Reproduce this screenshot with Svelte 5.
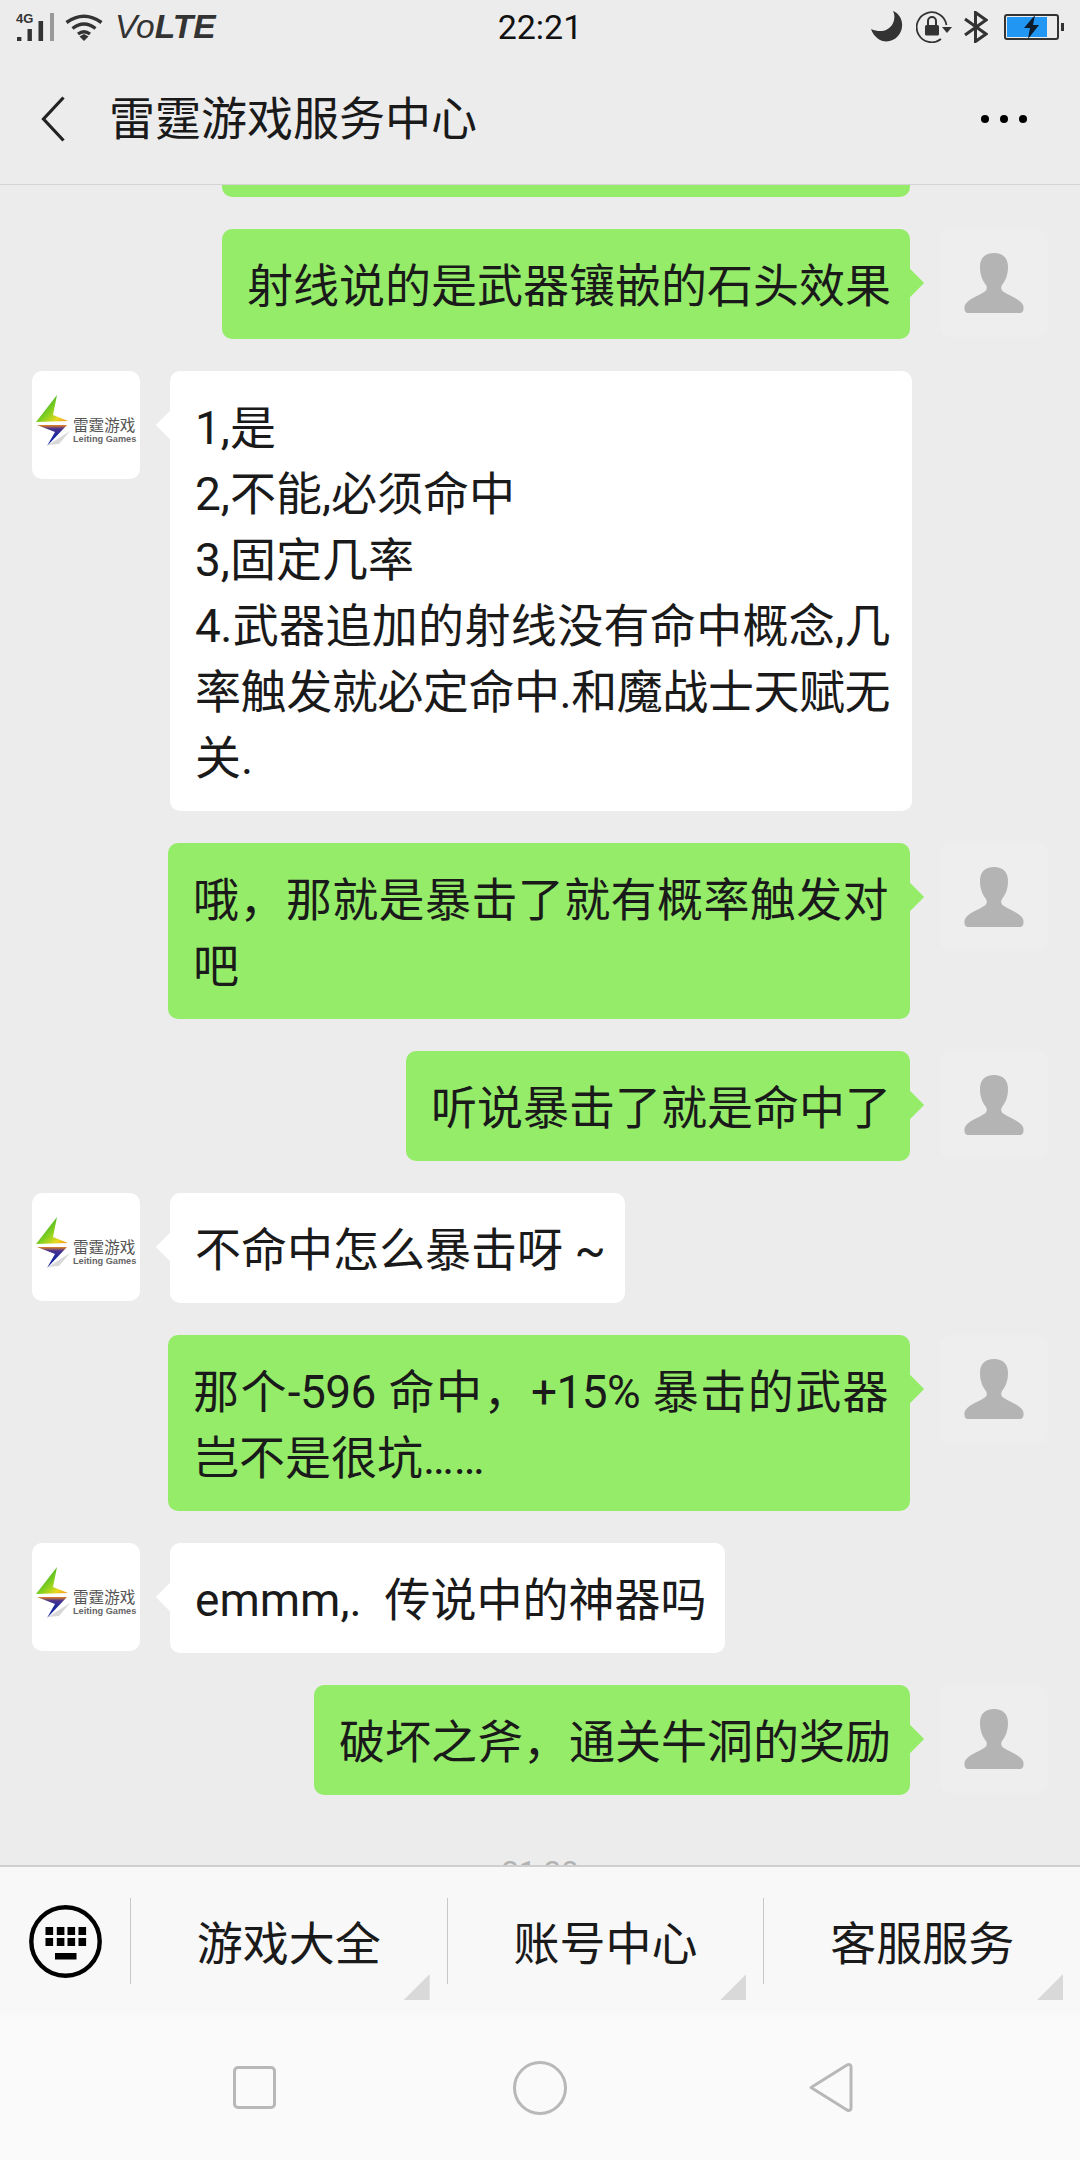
<script lang="ts">
  interface Message {
    from: 'me' | 'them'
    lines: string[]
  }

  const messages: Message[] = [
    { from: 'me', lines: ['射线说的是武器镶嵌的石头效果'] },
    {
      from: 'them',
      lines: [
        '1,是',
        '2,不能,必须命中',
        '3,固定几率',
        '4.武器追加的射线没有命中概念,几',
        '率触发就必定命中.和魔战士天赋无',
        '关.',
      ],
    },
    { from: 'me', lines: ['哦，那就是暴击了就有概率触发对', '吧'] },
    { from: 'me', lines: ['听说暴击了就是命中了'] },
    { from: 'them', lines: ['不命中怎么暴击呀 ~'] },
    { from: 'me', lines: ['那个-596 命中，+15% 暴击的武器', '岂不是很坑……'] },
    { from: 'them', lines: ['emmm,.  传说中的神器吗'] },
    { from: 'me', lines: ['破坏之斧，通关牛洞的奖励'] },
  ]

  const menus = ['游戏大全', '账号中心', '客服服务']

  // lines that wrapped at the bubble's max width fill it edge to edge
  const is_full_line = (message: Message, line: string) => message.lines.length > 1 && line.length >= 15
</script>

{#snippet logo()}
  <svg class="logo" viewBox="0 0 108 108">
    <defs>
      <linearGradient id="bolt_top" x1="10" y1="30" x2="32" y2="52" gradientUnits="userSpaceOnUse">
        <stop offset="0" stop-color="#2fae2c" />
        <stop offset="0.45" stop-color="#8cd21e" />
        <stop offset="0.75" stop-color="#e8d820" />
        <stop offset="1" stop-color="#f39a1c" />
      </linearGradient>
      <linearGradient id="bolt_bottom" x1="0" y1="54" x2="0" y2="75" gradientUnits="userSpaceOnUse">
        <stop offset="0" stop-color="#e8841f" />
        <stop offset="0.18" stop-color="#4a3490" />
        <stop offset="0.5" stop-color="#1c2a9c" />
        <stop offset="1" stop-color="#10209c" />
      </linearGradient>
    </defs>
    <path d="M16 74 L38 60 L27 73 Z" fill="#d8d8d8" />
    <path d="M25 24 L4 51 L36 50 L21 44 Z" fill="url(#bolt_top)" />
    <path d="M5 54 L35 54 L15 75 L23 61 Z" fill="url(#bolt_bottom)" />
    <text x="41" y="60" class="logo_cn">雷霆游戏</text>
    <text x="41" y="70.5" class="logo_en">Leiting Games</text>
  </svg>
{/snippet}

{#snippet person()}
  <svg class="person" viewBox="0 0 108 108">
    <path
      d="M54 24 C45 24 40 29 40 38 C40 47 43 52 46 56 C47.5 59 47 61 44 63 C38 67 28 70 25 76 C24 78 24 84 28 84 L80 84 C84 84 84 78 83 76 C80 70 70 67 64 63 C61 61 60.5 59 62 56 C65 52 68 47 68 38 C68 29 63 24 54 24 Z"
      fill="#b4b4b4"
    />
  </svg>
{/snippet}

<div class="phone">
  <header class="top">
    <div class="status">
      <div class="status_left">
        <svg class="signal" viewBox="0 0 40 32">
          <text x="0" y="12" class="four_g">4G</text>
          <rect x="1" y="26" width="4.4" height="4" fill="#333" />
          <rect x="11.5" y="18" width="4.4" height="12" fill="#333" />
          <rect x="22.5" y="10" width="4.6" height="20" fill="#333" />
          <rect x="34" y="2" width="4" height="28" fill="#999" />
        </svg>
        <svg class="wifi" viewBox="0 0 38 27">
          <path d="M1.5 8.5 Q19 -4 36.5 8.5" fill="none" stroke="#333" stroke-width="3.4" />
          <path d="M7.5 14.5 Q19 5.5 30.5 14.5" fill="none" stroke="#333" stroke-width="3.4" />
          <path d="M13 20 Q19 15.5 25 20" fill="none" stroke="#333" stroke-width="3.4" />
          <path d="M14.5 22.5 L19 20 L23.5 22.5 L19 27 Z" fill="#333" />
        </svg>
        <span class="volte">Vo<b>LTE</b></span>
      </div>
      <span class="clock">22:21</span>
      <div class="status_right">
        <svg class="moon" viewBox="0 0 32 32">
          <path d="M22 0 C32 4 34 17 27 25 C19 34 5 32 0 18 C9 22 17 20 21 14 C24 9 24 4 22 0 Z" fill="#333" />
        </svg>
        <svg class="lock" viewBox="0 0 36 32">
          <path d="M25 28 A15 15 0 1 1 30.5 14" fill="none" stroke="#333" stroke-width="1.8" />
          <path d="M26 16 L36 16 L31 22 Z" fill="#333" />
          <rect x="9" y="14" width="14" height="10.5" rx="1.5" fill="#333" />
          <path d="M12 14 V10 A4 4 0 0 1 20 10 V14" fill="none" stroke="#333" stroke-width="2" />
        </svg>
        <svg class="bluetooth" viewBox="0 0 24 32">
          <path d="M1 8 L22 23 L11.5 30.5 V1.5 L22 9 L1 24" fill="none" stroke="#333" stroke-width="3" />
        </svg>
        <svg class="battery" viewBox="0 0 60 26">
          <rect x="1" y="1" width="53" height="24" rx="2" fill="none" stroke="#333" stroke-width="2" />
          <rect x="3" y="3" width="40" height="20" fill="#2196f3" />
          <rect x="57" y="9" width="3" height="8" fill="#333" />
          <path d="M31 1 L20 14 L26 14 L24 25 L35 11 L29 11 Z" fill="#0d1b2a" />
        </svg>
      </div>
    </div>
    <nav class="title_bar">
      <svg class="back" viewBox="0 0 24 46">
        <path d="M22.5 1.5 L2.5 23 L22.5 44.5" fill="none" stroke="#222" stroke-width="3.2" />
      </svg>
      <h1>雷霆游戏服务中心</h1>
      <div class="dots"><i></i><i></i><i></i></div>
    </nav>
  </header>

  <main class="chat">
    <div class="scroller">
      <div class="row me">
        <div class="bubble cut_bubble"></div>
        <div class="avatar_space"></div>
      </div>
      {#each messages as message}
        <div class="row {message.from}">
          {#if message.from === 'them'}
            <div class="avatar white">{@render logo()}</div>
          {/if}
          <div class="bubble" class:wrapped={message.lines.length > 1}>
            {#each message.lines as line}
              <div class="line" class:full={is_full_line(message, line)}>{line}</div>
            {/each}
          </div>
          {#if message.from === 'me'}
            <div class="avatar">{@render person()}</div>
          {/if}
        </div>
      {/each}
      <div class="time">21:28</div>
    </div>
  </main>

  <section class="menu">
    <div class="keyboard">
      <svg viewBox="0 0 73 73" class="kb_icon">
        <circle cx="36.5" cy="36.5" r="34.2" fill="none" stroke="#000" stroke-width="4.4" />
        {#each [16.5, 27.8, 38.5, 49.5] as x}
          <rect {x} y="22" width="7.6" height="8" fill="#000" />
          <rect {x} y="33" width="7.6" height="8" fill="#000" />
        {/each}
        <rect x="26" y="48" width="21.5" height="6.5" fill="#000" />
      </svg>
    </div>
    {#each menus as item}
      <div class="menu_item">
        {item}
        <span class="corner"></span>
      </div>
    {/each}
  </section>

  <footer class="softkeys">
    <span class="square"></span>
    <span class="circle"></span>
    <svg class="triangle" viewBox="0 0 45 51">
      <path d="M3 25.5 L39 3 Q43 1.5 43 5 V46 Q43 49.5 39 48 Z" fill="none" stroke="#b8b8b8" stroke-width="3" stroke-linejoin="round" />
    </svg>
  </footer>
</div>

<style>
  :global(body) {
    margin: 0;
  }

  .phone {
    display: flex;
    flex-direction: column;
    width: 1080px;
    height: 2160px;
    overflow: hidden;
    background: #ececec;
    color: #1a1a1a;
    font-family: Roboto, 'Noto Sans CJK SC', sans-serif;
  }

  .top {
    flex: none;
    box-sizing: border-box;
    height: 185px;
    border-bottom: 1px solid #d4d4d4;
  }

  .status {
    display: grid;
    grid-template-columns: 1fr auto 1fr;
    align-items: center;
    height: 54px;
    padding: 0 16px;
  }

  .status_left,
  .status_right {
    display: flex;
    align-items: center;
  }

  .status_right {
    justify-content: flex-end;
  }

  .signal {
    width: 40px;
    height: 32px;
  }

  .four_g {
    font-family: 'Liberation Sans', sans-serif;
    font-size: 13px;
    font-weight: 700;
    fill: #333;
  }

  .wifi {
    width: 38px;
    height: 27px;
    margin-left: 9px;
  }

  .volte {
    margin-left: 12px;
    font-family: 'Liberation Sans', sans-serif;
    font-size: 33.5px;
    font-style: italic;
    color: #333;
  }

  .clock {
    font-size: 34px;
    line-height: 40px;
    color: #111;
  }

  .moon {
    width: 32px;
    height: 32px;
  }

  .lock {
    width: 36px;
    height: 32px;
    margin-left: 13px;
  }

  .bluetooth {
    width: 24px;
    height: 32px;
    margin-left: 12px;
  }

  .battery {
    width: 60px;
    height: 26px;
    margin-left: 16px;
  }

  .title_bar {
    display: flex;
    align-items: center;
    height: 130px;
    padding: 0 53px 0 41px;
  }

  .back {
    width: 24px;
    height: 46px;
  }

  h1 {
    flex: 1;
    margin: 0 0 0 44px;
    font-size: 46px;
    font-weight: 400;
    line-height: 60px;
  }

  .dots {
    display: flex;
    gap: 11px;
  }

  .dots i {
    width: 8px;
    height: 8px;
    border-radius: 50%;
    background: #000;
  }

  .chat {
    flex: none;
    height: 1680px;
    overflow: hidden;
  }

  .scroller {
    display: flex;
    flex-direction: column;
    gap: 32px;
    margin-top: -98px;
  }

  .row {
    display: flex;
    align-items: flex-start;
    padding: 0 32px;
  }

  .row.me {
    justify-content: flex-end;
  }

  .avatar,
  .avatar_space {
    flex: none;
    width: 108px;
    height: 108px;
    border-radius: 10px;
  }

  .avatar {
    background: #eeeeee;
  }

  .avatar.white {
    background: #fff;
  }

  .bubble {
    position: relative;
    box-sizing: border-box;
    padding: 24px 19px 20px 25px;
    border-radius: 10px;
    background: #fff;
    font-size: 46px;
    line-height: 66px;
    white-space: pre;
  }

  .bubble.wrapped {
    width: 742px;
    padding-right: 22px;
  }

  .line.full {
    letter-spacing: -0.6px;
    white-space: nowrap;
    text-align: justify;
    text-align-last: justify;
  }

  .cut_bubble {
    width: 688px;
    height: 110px;
  }

  .bubble::after {
    content: '';
    position: absolute;
    top: 44px;
    width: 20px;
    height: 20px;
    background: inherit;
    transform: rotate(45deg);
  }

  .me .bubble {
    margin-right: 30px;
    background: #95ec69;
  }

  .me .bubble::after {
    right: -10px;
  }

  .them .bubble {
    margin-left: 30px;
  }

  .them .bubble::after {
    left: -10px;
  }

  .logo,
  .person {
    display: block;
    width: 108px;
    height: 108px;
  }

  .logo_cn {
    font-size: 15.6px;
    fill: #555;
  }

  .logo_en {
    font-family: 'Liberation Sans', sans-serif;
    font-size: 9.2px;
    font-weight: 700;
    fill: #666;
  }

  .time {
    padding-top: 27px;
    font-size: 31px;
    text-align: center;
    color: #b2b2b2;
  }

  .menu {
    display: flex;
    flex: none;
    box-sizing: border-box;
    height: 150px;
    border-top: 2px solid #cfcfcf;
    background: #f8f8f8;
  }

  .keyboard {
    flex: none;
    box-sizing: border-box;
    width: 130px;
    padding: 38px 0 0 29px;
  }

  .kb_icon {
    display: block;
    width: 73px;
    height: 73px;
  }

  .menu_item {
    position: relative;
    display: flex;
    flex: 1;
    align-items: center;
    justify-content: center;
    box-sizing: border-box;
    height: 86px;
    margin-top: 31px;
    padding-bottom: 2px;
    border-left: 1px solid #c8c8c8;
    font-size: 46px;
  }

  .corner {
    position: absolute;
    right: 17px;
    bottom: -16px;
    width: 26px;
    height: 26px;
    background: #d9d9d9;
    clip-path: polygon(100% 0, 100% 100%, 0 100%);
  }

  .softkeys {
    display: flex;
    flex: 1;
    align-items: center;
    padding-left: 233px;
    background: #fafafa;
  }

  .square {
    box-sizing: border-box;
    width: 43px;
    height: 43px;
    border: 3px solid #b8b8b8;
    border-radius: 5px;
  }

  .circle {
    box-sizing: border-box;
    width: 54px;
    height: 54px;
    margin-left: 237px;
    border: 3px solid #b8b8b8;
    border-radius: 50%;
  }

  .triangle {
    width: 45px;
    height: 51px;
    margin-left: 241px;
  }
</style>
